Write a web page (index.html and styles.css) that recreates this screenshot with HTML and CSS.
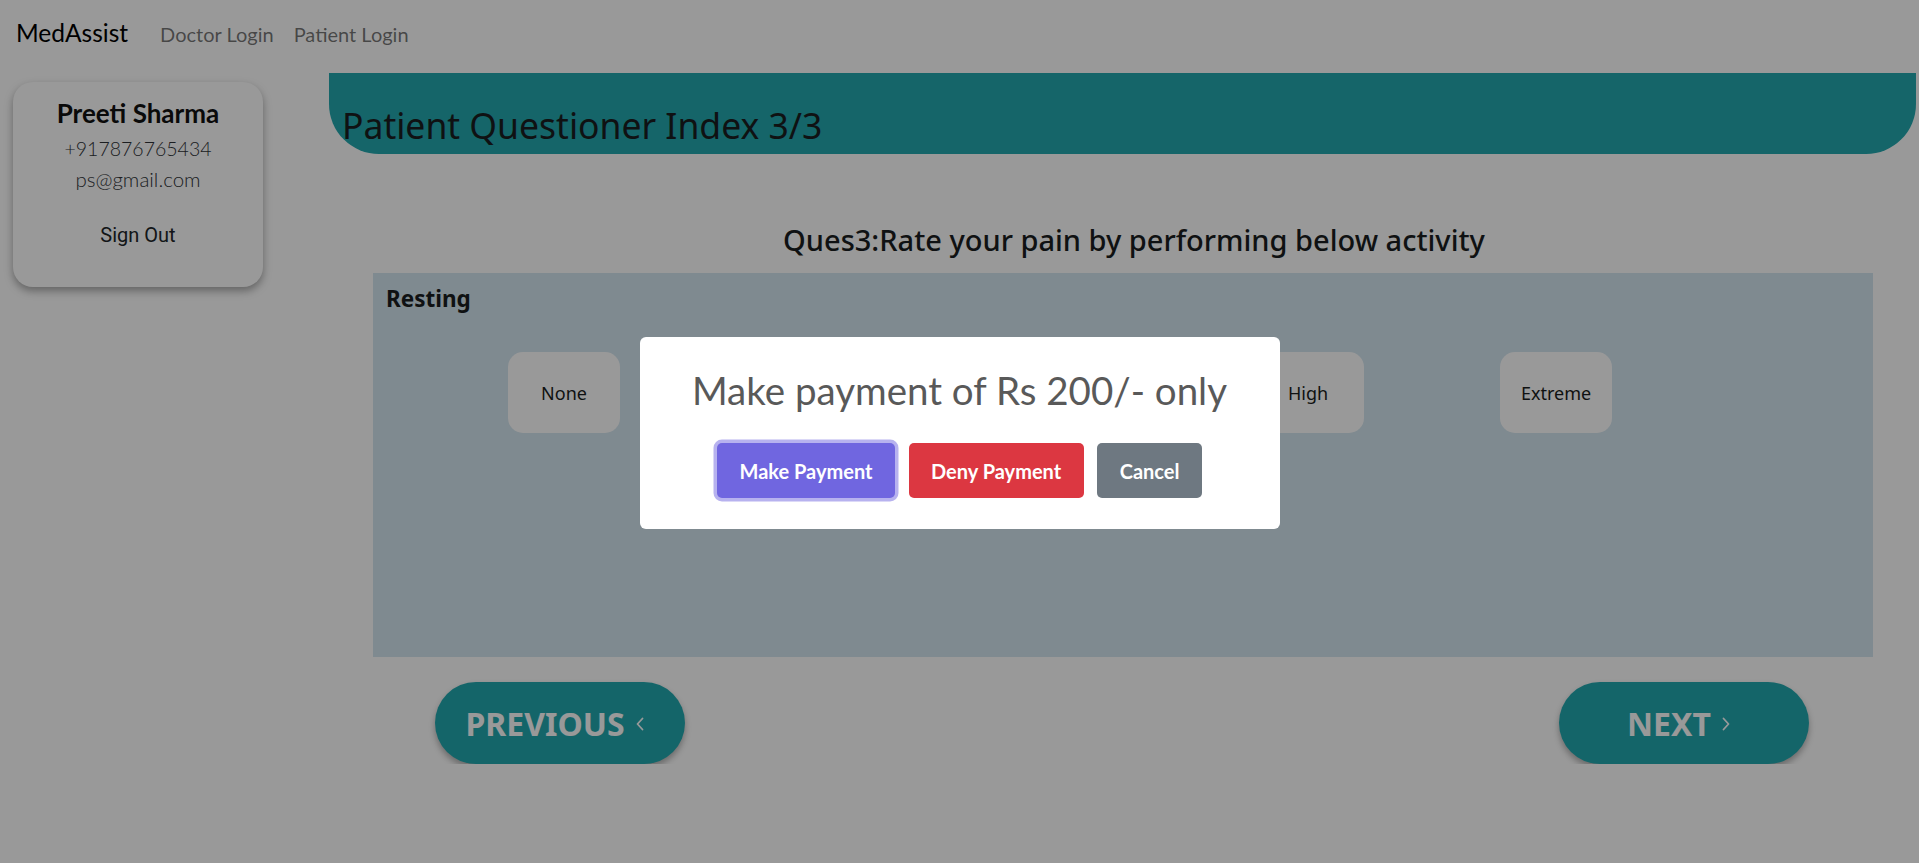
FILE: index.html
```html
<!DOCTYPE html>
<html lang="en">
<head>
<meta charset="utf-8">
<title>MedAssist - Patient Questioner</title>
<link rel="stylesheet" href="styles.css">
</head>
<body>
<nav class="navbar">
  <a class="brand" href="#">MedAssist</a>
  <a class="nav-link" href="#">Doctor Login</a>
  <a class="nav-link" href="#">Patient Login</a>
</nav>

<div class="layout">
  <aside class="sidebar">
    <div class="profile-card">
      <div class="profile-name">Preeti Sharma</div>
      <div class="profile-line">+917876765434</div>
      <div class="profile-line">ps@gmail.com</div>
      <button class="signout">Sign Out</button>
    </div>
  </aside>

  <main class="main">
    <header class="page-head">
      <h1 class="page-title">Patient Questioner Index 3/3</h1>
    </header>

    <section class="question">
      <h2 class="question-title">Ques3:Rate your pain by performing below activity</h2>
      <div class="activity-box">
        <h3 class="activity-name">Resting</h3>
        <div class="options">
          <button class="option">None</button>
          <button class="option">Mild</button>
          <button class="option">Moderate</button>
          <button class="option">High</button>
          <button class="option">Extreme</button>
        </div>
      </div>
      <div class="pager">
        <button class="pager-btn">PREVIOUS
          <svg class="chev" viewBox="0 0 10 16" width="10" height="16"><polyline points="7.5,2.5 2.5,8 7.5,13.5" fill="none" stroke="currentColor" stroke-width="1.8" stroke-linecap="round" stroke-linejoin="round"/></svg>
        </button>
        <button class="pager-btn">NEXT
          <svg class="chev" viewBox="0 0 10 16" width="10" height="16"><polyline points="2.5,2.5 7.5,8 2.5,13.5" fill="none" stroke="currentColor" stroke-width="1.8" stroke-linecap="round" stroke-linejoin="round"/></svg>
        </button>
      </div>
    </section>
  </main>
</div>

<div class="swal-container">
  <div class="swal-popup">
    <h2 class="swal-title">Make payment of Rs 200/- only</h2>
    <div class="swal-actions">
      <button class="swal-btn swal-confirm">Make Payment</button>
      <button class="swal-btn swal-deny">Deny Payment</button>
      <button class="swal-btn swal-cancel">Cancel</button>
    </div>
  </div>
</div>
</body>
</html>
```

FILE: styles.css
```css
* { box-sizing: border-box; }

html, body {
  margin: 0;
  padding: 0;
  background: #ffffff;
  font-family: "Lato", "Noto Sans", sans-serif;
  color: #212529;
  overflow: hidden;
}

button {
  font: inherit;
  border: 0;
  cursor: pointer;
}

/* ---------- navbar ---------- */
.navbar {
  height: 68px;
  display: flex;
  align-items: baseline;
  padding: 18px 16px 0;
  background: #ffffff;
}
.brand {
  font-size: 24.5px;
  line-height: 30px;
  color: #000;
  text-decoration: none;
  margin-right: 22px;
}
.nav-link {
  font-size: 20px;
  line-height: 30px;
  color: rgba(0, 0, 0, 0.55);
  text-decoration: none;
  padding: 0 10px;
}

/* ---------- layout ---------- */
.layout {
  display: flex;
}
.sidebar {
  width: 329px;
  flex: 0 0 329px;
  padding: 14px 0 0 13px;
}
.profile-card {
  width: 250px;
  height: 205px;
  background: #ffffff;
  border-radius: 20px;
  box-shadow: 0 4px 8px rgba(0, 0, 0, 0.35);
  padding: 11px 0 0;
  text-align: center;
  display: flex;
  flex-direction: column;
  align-items: center;
}
.profile-name {
  font-size: 26px;
  line-height: 40px;
  font-weight: 700;
  color: #111;
}
.profile-line {
  font-size: 19.5px;
  line-height: 31px;
  font-weight: 300;
  color: #2f3338;
}
.profile-line + .profile-line {
  font-size: 20.5px;
}
.signout {
  margin-top: 25px;
  background: transparent;
  font-family: "Roboto", sans-serif;
  font-size: 20px;
  line-height: 31px;
  color: #212529;
  padding: 0;
}

/* ---------- main ---------- */
.main {
  flex: 1;
  padding: 5px 3px 0 0;
}
.page-head {
  height: 81px;
  background: #23a8af;
  border-radius: 0 0 50px 50px;
  padding: 31px 13px 0;
}
.page-title {
  margin: 0;
  font-family: "Noto Sans", sans-serif;
  font-weight: 400;
  font-size: 35.5px;
  line-height: 42px;
  color: #1a1d20;
}

.question {
  padding: 0 43px 0 44px;
}
.question-title {
  margin: 69px 0 16px;
  padding-left: 22px;
  text-align: center;
  font-family: "Noto Sans", sans-serif;
  font-weight: 500;
  font-size: 29px;
  line-height: 34px;
  color: #1a1d20;
}
.activity-box {
  height: 384px;
  background: #d4e6f0;
  padding: 11px 13px 0;
}
.activity-name {
  margin: 0;
  font-family: "Noto Sans", sans-serif;
  font-weight: 700;
  font-size: 22.5px;
  line-height: 30px;
  color: #1a1d20;
}
.options {
  display: flex;
  gap: 136px;
  margin-top: 38px;
  padding-left: 122px;
}
.option {
  width: 112px;
  height: 81px;
  border-radius: 15px;
  background: #ffffff;
  font-family: "Noto Sans", sans-serif;
  font-size: 18px;
  color: #1a1d20;
}

.pager {
  display: flex;
  justify-content: space-between;
  margin-top: 25px;
  padding: 0 64px 0 62px;
}
.pager-btn {
  width: 250px;
  height: 82px;
  border-radius: 41px;
  background: #22a9b0;
  color: #ffffff;
  font-family: "Noto Sans", sans-serif;
  font-weight: 700;
  font-size: 32px;
  display: flex;
  align-items: center;
  justify-content: center;
  gap: 10px;
  padding: 0 10px 0 0;
  box-shadow: 0 4px 6px rgba(0, 0, 0, 0.3);
}
.chev {
  display: block;
  margin-top: 2px;
}

/* ---------- sweetalert style modal ---------- */
.swal-container {
  position: fixed;
  inset: 0;
  background: rgba(0, 0, 0, 0.4);
  display: flex;
  align-items: center;
  justify-content: center;
  padding-top: 3px;
}
.swal-popup {
  width: 640px;
  background: #ffffff;
  border-radius: 6px;
  padding: 0 0 25px;
  text-align: center;
}
.swal-title {
  margin: 0;
  padding: 30px 20px 0;
  font-family: "Lato", sans-serif;
  font-weight: 400;
  font-size: 38.5px;
  line-height: 46px;
  color: #595959;
}
.swal-actions {
  margin-top: 24px;
  display: flex;
  justify-content: center;
}
.swal-btn {
  margin: 6.25px 6.75px;
  padding: 12.5px 22.5px;
  border-radius: 5px;
  font-family: "Lato", sans-serif;
  font-weight: 700;
  font-size: 20px;
  line-height: 30px;
  color: #ffffff;
}
.swal-confirm {
  background: #7066e0;
  box-shadow: 0 0 0 3.5px rgba(112, 102, 224, 0.5);
}
.swal-deny {
  background: #dc3741;
}
.swal-cancel {
  background: #6e7881;
}
```
